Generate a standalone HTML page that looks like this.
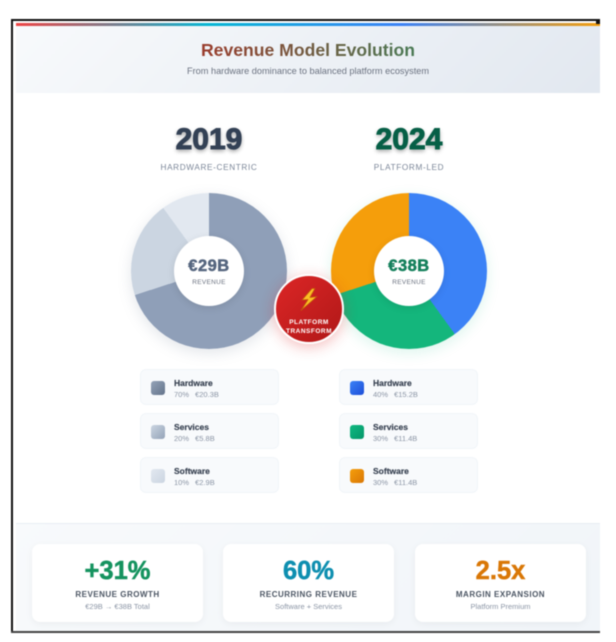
<!DOCTYPE html>
<html><head><meta charset="utf-8">
<style>
html,body{margin:0;padding:0;background:#fff}
body{width:616px;height:642px;position:relative;overflow:hidden;font-family:"Liberation Sans",sans-serif}
div,span{position:absolute;box-sizing:border-box}
#w{left:0;top:0;width:616px;height:642px;filter:blur(.45px)}
.t{text-align:center;white-space:nowrap}
.pie{width:156px;height:156px;top:193px;border-radius:50%}
.hole{width:70px;height:70px;top:236px;border-radius:50%;background:#fff;box-shadow:0 2px 8px rgba(0,0,0,.1)}
.leg{width:139px;height:36px;background:#f8fafc;border:1px solid #f1f5f9;border-radius:6px}
.sw{width:14px;height:14px;border-radius:3px}
.n{font-size:8.5px;font-weight:bold;color:#374151;white-space:nowrap;-webkit-text-stroke:.15px #374151}
.s{font-size:7.5px;color:#8b95a5;white-space:nowrap;word-spacing:4px}
.card{top:544px;width:171px;height:78px;background:#fff;border-radius:8px;box-shadow:0 2px 8px rgba(0,0,0,.05)}
.v{font-size:25.5px;font-weight:bold;width:171px;top:556px;line-height:30px;-webkit-text-stroke:.5px currentColor}
.l{font-size:8px;font-weight:bold;color:#4b5563;letter-spacing:.5px;width:171px;top:589px;line-height:11px}
.u{font-size:7.5px;color:#8b95a5;width:171px;top:602px;line-height:10px}
.yr{width:200px;top:122px;line-height:36px;font-size:30px;font-weight:bold;-webkit-text-stroke:1px currentColor;text-shadow:0 2px 4px rgba(0,0,0,.4)}
.lb{width:200px;top:162px;line-height:12px;font-size:8.2px;letter-spacing:.65px;color:#7b8698}
.big{width:70px;top:257px;line-height:18px;font-size:16.5px;font-weight:bold;letter-spacing:.5px;-webkit-text-stroke:.5px currentColor}
.rv{width:70px;top:278px;line-height:10px;font-size:6.5px;letter-spacing:.3px;color:#6b7280}
</style></head><body>
<div id="w">
<div style="left:16px;top:25px;width:584px;height:68px;background:linear-gradient(135deg,#f8fafc,#e2e8f0)"></div>
<div style="left:16px;top:523px;width:584px;height:109px;background:linear-gradient(135deg,#f8fafc,#f1f5f9);border-top:1px solid #e8edf3"></div>
<div style="left:16px;top:23px;width:584px;height:2.5px;background:linear-gradient(90deg,#ef4444,#06b6d4 33%,#3b82f6 66%,#f59e0b)"></div>
<div style="left:11px;top:19px;width:2px;height:614px;background:#111"></div>
<div style="left:11px;top:19px;width:589px;height:2px;background:#111"></div>
<div style="left:596px;top:19px;width:4px;height:5px;background:#111"></div>
<div style="left:11px;top:631px;width:589px;height:1.5px;background:#444"></div>

<div class="t" style="left:16px;width:584px;top:38px;line-height:24px;font-size:17.6px;font-weight:bold"><span style="position:static;background:linear-gradient(90deg,#9a3c2c,#4a7a55);-webkit-background-clip:text;background-clip:text;color:transparent">Revenue Model Evolution</span></div>
<div class="t" style="left:16px;width:584px;top:65px;line-height:13px;font-size:9.2px;color:#6b7280">From hardware dominance to balanced platform ecosystem</div>

<div class="t yr" style="left:109px;color:#334155">2019</div>
<div class="t yr" style="left:309px;color:#065f46">2024</div>
<div class="t lb" style="left:109px">HARDWARE-CENTRIC</div>
<div class="t lb" style="left:309px">PLATFORM-LED</div>

<div class="pie" style="left:131px;background:conic-gradient(#8f9fb8 0 70%,#cbd5e1 70% 90%,#e2e8f0 90% 100%);box-shadow:0 4px 14px rgba(100,116,139,.18)"></div>
<div class="pie" style="left:331px;background:conic-gradient(#3b82f6 0 40%,#14b67c 40% 70%,#f59e0b 70% 100%);box-shadow:0 4px 14px rgba(16,185,129,.14)"></div>
<div class="hole" style="left:174px"></div>
<div class="hole" style="left:374px"></div>
<div class="t big" style="left:174px;color:#56667f">€29B</div>
<div class="t big" style="left:374px;color:#15805c">€38B</div>
<div class="t rv" style="left:174px">REVENUE</div>
<div class="t rv" style="left:374px">REVENUE</div>

<div style="left:274px;top:274px;width:70px;height:70px;border-radius:50%;border:2px solid #fff;background:linear-gradient(135deg,#dc2626,#b01818);box-shadow:0 3px 14px rgba(220,38,38,.3)"></div>
<svg style="position:absolute;left:300px;top:288px" width="18" height="23" viewBox="0 0 18 23"><path d="M12 .5 L2 12 L8 11.5 L1 22.5 L17 8.5 L10 9.5 L15 .5 Z" fill="#fbbf24" stroke="#c2550c" stroke-width=".8" stroke-linejoin="round"/></svg>
<div class="t" style="left:274px;width:70px;top:319px;line-height:8.5px;font-size:6.5px;font-weight:bold;letter-spacing:.5px;color:#fff">PLATFORM<br>TRANSFORM</div>

<div class="leg" style="left:140px;top:369px"></div>
<div class="leg" style="left:140px;top:413px"></div>
<div class="leg" style="left:140px;top:457px"></div>
<div class="leg" style="left:339px;top:369px"></div>
<div class="leg" style="left:339px;top:413px"></div>
<div class="leg" style="left:339px;top:457px"></div>

<div class="sw" style="left:151px;top:381px;background:linear-gradient(135deg,#94a3b8,#64748b)"></div>
<div class="sw" style="left:151px;top:425px;background:linear-gradient(135deg,#cbd5e1,#94a3b8)"></div>
<div class="sw" style="left:151px;top:469px;background:linear-gradient(135deg,#e2e8f0,#cbd5e1)"></div>
<div class="sw" style="left:350px;top:381px;background:linear-gradient(135deg,#3b82f6,#1d4ed8)"></div>
<div class="sw" style="left:350px;top:425px;background:linear-gradient(135deg,#10b981,#059669)"></div>
<div class="sw" style="left:350px;top:469px;background:linear-gradient(135deg,#f59e0b,#d97706)"></div>

<div class="n" style="left:174px;top:378px">Hardware</div><div class="s" style="left:174px;top:390px">70% €20.3B</div>
<div class="n" style="left:174px;top:422px">Services</div><div class="s" style="left:174px;top:434px">20% €5.8B</div>
<div class="n" style="left:174px;top:466px">Software</div><div class="s" style="left:174px;top:478px">10% €2.9B</div>
<div class="n" style="left:373px;top:378px">Hardware</div><div class="s" style="left:373px;top:390px">40% €15.2B</div>
<div class="n" style="left:373px;top:422px">Services</div><div class="s" style="left:373px;top:434px">30% €11.4B</div>
<div class="n" style="left:373px;top:466px">Software</div><div class="s" style="left:373px;top:478px">30% €11.4B</div>

<div class="card" style="left:32px"></div>
<div class="card" style="left:223px"></div>
<div class="card" style="left:415px"></div>
<div class="t v" style="left:32px;color:#15935f">+31%</div>
<div class="t v" style="left:223px;color:#0e8fb0">60%</div>
<div class="t v" style="left:415px;color:#d97706">2.5x</div>
<div class="t l" style="left:32px">REVENUE GROWTH</div>
<div class="t l" style="left:223px">RECURRING REVENUE</div>
<div class="t l" style="left:415px">MARGIN EXPANSION</div>
<div class="t u" style="left:32px">€29B → €38B Total</div>
<div class="t u" style="left:223px">Software + Services</div>
<div class="t u" style="left:415px">Platform Premium</div>
</div>
</body></html>
